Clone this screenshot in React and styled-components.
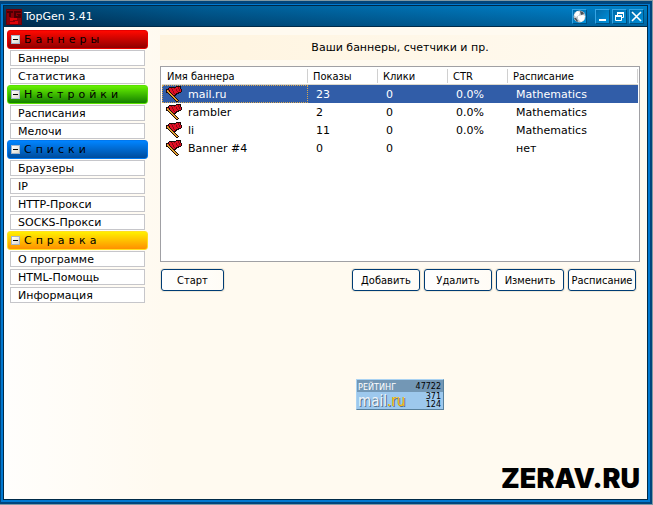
import React from "react";
import styled, { createGlobalStyle } from "styled-components";

const Global = createGlobalStyle`
  * { box-sizing: border-box; }
  html, body { margin: 0; background: #7f99a5; }
  body, button, table { font-family: "DejaVu Sans", Verdana, sans-serif; font-size: 11px; line-height: 14px; color: #000; }
`;

const condensed = `font-family: "DejaVu Sans Condensed", "DejaVu Sans", Tahoma, sans-serif;`;

const Desktop = styled.div`
  padding: 1px 1px 1px 0;
  min-height: 100vh;
  display: flex;
`;

const Frame = styled.div`
  flex: 1;
  display: flex;
  border: solid #00457c;
  border-width: 3px 2px 2px 1px;
  background: #0078d0;
  padding: 1px 2px 2px 2px;
`;

const Win = styled.div`
  flex: 1;
  display: flex;
  flex-direction: column;
  border: 1px solid #002a48;
  background: linear-gradient(90deg, #fffefc 0, #fffaf0 160px, #fffaf0 100%);
`;

const TitleBar = styled.header`
  height: 21px;
  display: flex;
  align-items: center;
  padding: 1px 3px 0 2px;
  background:
    linear-gradient(180deg, rgba(0, 110, 180, 0.25), rgba(0, 20, 50, 0.3)),
    linear-gradient(90deg, #003252 0, #00588c 200px, #0084cc 88%, #0088d0 100%);
  border-bottom: 1px solid #002a48;
`;

const Title = styled.h1`
  flex: 1;
  margin: 0 0 0 2px;
  font-size: 11px;
  font-weight: normal;
  line-height: 14px;
  color: #fff;
`;

const CapButton = styled.button`
  width: 15px;
  height: 15px;
  padding: 0;
  margin-left: ${(p) => (p.$apart ? 8 : 2)}px;
  display: grid;
  place-items: center;
  border: 1px solid;
  border-color: #35a4e4 #00507f #00507f #35a4e4;
  background: linear-gradient(135deg, #0069a8, #0092dc);
`;

const Body = styled.div`
  flex: 1;
  display: flex;
  padding: 3px 7px 3px 3px;
  gap: 12px;
`;

const Sidebar = styled.nav`
  width: 141px;
  flex: none;
`;

const Group = styled.section`
  padding-bottom: 1px;
`;

const GroupHeader = styled.button`
  display: flex;
  align-items: center;
  width: 100%;
  height: 19px;
  margin-bottom: 1px;
  padding: 0 3px;
  gap: 4px;
  border: 1px solid ${(p) => p.$edge};
  border-radius: 3px;
  background: linear-gradient(180deg, ${(p) => p.$from}, ${(p) => p.$to});
  letter-spacing: 4px;
  white-space: nowrap;
`;

const Collapse = styled.span`
  width: 9px;
  height: 9px;
  display: grid;
  place-items: center;
  border: 1px solid #a4b4c8;
  background: linear-gradient(135deg, #fff, #dcd8cc);
  flex: none;

  &::after {
    content: "";
    width: 5px;
    height: 1px;
    background: #000;
  }
`;

const Items = styled.ul`
  list-style: none;
  margin: 0;
  padding: 0 3px;
  display: grid;
  gap: 2px;
`;

const Item = styled.a`
  display: block;
  height: 16px;
  padding-left: 7px;
  border: 1px solid #c6c6ca;
  background: #fff;
  color: #000;
  line-height: 15px;
  text-decoration: none;
`;

const Main = styled.main`
  flex: 1;
  min-width: 0;
  display: flex;
  flex-direction: column;
`;

const Heading = styled.h2`
  margin: 5px 0 6px;
  height: 25px;
  font-size: 11px;
  font-weight: normal;
  line-height: 26px;
  text-align: center;
  background: linear-gradient(90deg, #fff4df, #fffaf0);
`;

const ListBox = styled.div`
  height: 196px;
  padding: 0 1px;
  border: 1px solid #a0a0a4;
  background: #fff;
`;

const Table = styled.table`
  width: 100%;
  table-layout: fixed;
  border-collapse: separate;
  border-spacing: 0;
`;

const Col = styled.col`
  width: ${(p) => p.$w};
`;

const Th = styled.th`
  ${condensed}
  height: 18px;
  padding: 3px 0 0 5px;
  font-weight: normal;
  line-height: 14px;
  text-align: left;
  border-bottom: 1px solid #dcd8cc;
  background: linear-gradient(#d0d0d0, #d0d0d0) right 2px / 1px 14px no-repeat;
`;

const Row = styled.tr`
  background: ${(p) => (p.$selected ? "#315da8" : "transparent")};
  color: ${(p) => (p.$selected ? "#fff" : "#000")};
`;

const Td = styled.td`
  height: 18px;
  padding: 2px 0 0 8px;
  line-height: 16px;
`;

const NameTd = styled(Td)`
  padding: 0 0 0 3px;
  border: 1px dotted ${(p) => (p.$selected ? "#d8a850" : "transparent")};
`;

const Name = styled.span`
  display: flex;
  align-items: center;
  gap: 6px;
  height: 16px;
`;

const NameText = styled.span`
  padding-top: 2px;
  line-height: 14px;
`;

const Actions = styled.div`
  display: flex;
  gap: 4px;
  margin: 7px 4px 0 1px;
`;

const Push = styled.button`
  ${condensed}
  width: ${(p) => (p.$first ? 63 : 68)}px;
  height: 22px;
  margin-right: ${(p) => (p.$first ? "auto" : "0")};
  padding: 1px 0 0;
  border: 1px solid #003c74;
  border-radius: 3px;
  background: linear-gradient(90deg, #fff, #fffcf6);
  box-shadow: 0 0 0 1px #efe8d8;
  white-space: nowrap;
`;

const Rating = styled.a`
  align-self: center;
  width: 88px;
  height: 31px;
  margin: 88px 0 0;
  display: grid;
  grid-template-rows: 12px 17px;
  border: 1px solid;
  border-color: #a9d2f2 #58809c #58809c #a9d2f2;
  background: linear-gradient(#7397b5 12px, #9dc8ed 12px);
  color: #000;
  text-decoration: none;
  font-size: 8px;
  line-height: 8px;
`;

const RatingLine = styled.span`
  display: flex;
  align-items: center;
  justify-content: space-between;
  padding: 1px 2px 0 1px;
`;

const RatingLabel = styled.span`
  ${condensed}
  font-size: 9px;
  color: #fff;
`;

const MailLogo = styled.span`
  ${condensed}
  font-size: 15px;
  line-height: 15px;
  color: #eef4fa;
  text-shadow: 1px 1px 0 #566f86;
`;

const MailRu = styled.span`
  color: #f5b800;
`;

const Counts = styled.span`
  text-align: right;
`;

const Brand = styled.div`
  margin-top: auto;
  align-self: flex-end;
  font-family: Inter, "Liberation Sans", sans-serif;
  font-size: 27px;
  font-weight: 900;
  line-height: 34px;
`;

const flagColors = { k: "#1c0a08", r: "#e01024", d: "#8c0814", o: "#e0a030" };
const flagPixels = [
  "..........kkkkk.",
  "...kkkkkkkrrdrk.",
  "..krrdrrdrrrdrk.",
  "kkkrrrdrrrdrrdrk",
  "korkrrdrrrdrrdrk",
  "kookrrrdrrrdrrrk",
  "kkookrrdrrrrkkk.",
  "..kookrrdrkkk...",
  "...kookrrkk.....",
  "....kookkk......",
  ".....kook.......",
  "......kook......",
  ".......kook.....",
  "........kook....",
  ".........kook...",
  "..........kk....",
];

const flagPath = (key) =>
  flagPixels
    .flatMap((line, y) => [...line].map((c, x) => (c === key ? `M${x} ${y}h1v1h-1z` : "")))
    .join("");

const FlagIcon = () => (
  <svg width="16" height="16" viewBox="0 0 16 16" shapeRendering="crispEdges" aria-hidden="true">
    {Object.entries(flagColors).map(([key, color]) => (
      <path key={key} d={flagPath(key)} fill={color} />
    ))}
  </svg>
);

const AppIcon = () => (
  <svg width="16" height="16" viewBox="0 0 16 16" aria-hidden="true">
    <path d="M0 0h16v16H0z" fill="#8c0008" />
    <path d="M1 2h6v2H5v4H3V4H1zM8 2h7v2h-5v3h2V6h-1V5h4v4H8z" fill="#4c0004" />
    <path d="M4 9h7v2H7v1h5v3H4v-2h5v-1H4z" fill="#e00408" />
    <path d="M0.500 0.500h15v15h-15z" fill="none" stroke="#6c0006" />
  </svg>
);

const GlobeIcon = () => (
  <svg width="13" height="13" viewBox="0 0 13 13" aria-hidden="true">
    <circle cx="6.500" cy="6.500" r="6" fill="#c4c8cc" />
    <path d="M1 5l3-4 3 1-1 3-3 2zM5 6l5-1 2 1-1 4-3 2-3-3z" fill="#fff" />
    <path d="M7 1l3 1 1 2-3 1zM1 8l2 0 2 3-1 1z" fill="#4c5258" />
  </svg>
);

const glyphs = {
  min: <path d="M3 9h7v2H3z" fill="#fff" />,
  restore: (
    <>
      <path d="M4 2h7v2H4zM2 5h7v2H2z" fill="#fff" />
      <path d="M4.500 5V2.500h6v5H9M2.500 5.500h6v5h-6z" fill="none" stroke="#fff" />
    </>
  ),
  close: <path d="M2 2l9 9M11 2l-9 9" fill="none" stroke="#fff" strokeWidth="1.600" />,
};

const CapGlyph = ({ kind }) => (
  <svg width="13" height="13" viewBox="0 0 13 13" aria-hidden="true">
    {glyphs[kind]}
  </svg>
);

const groups = [
  { title: "Баннеры", from: "#ff0800", to: "#900000", edge: "#e80000", items: ["Баннеры", "Статистика"] },
  { title: "Настройки", from: "#66f000", to: "#148000", edge: "#58e000", items: ["Расписания", "Мелочи"] },
  { title: "Списки", from: "#0084ff", to: "#004c9c", edge: "#0078f0", items: ["Браузеры", "IP", "HTTP-Прокси", "SOCKS-Прокси"] },
  { title: "Справка", from: "#fff000", to: "#ff9000", edge: "#ffe020", items: ["О программе", "HTML-Помощь", "Информация"] },
];

const widths = ["146px", "70px", "70px", "60px", "auto"];
const columns = ["Имя баннера", "Показы", "Клики", "CTR", "Расписание"];
const rows = [
  ["mail.ru", "23", "0", "0.0%", "Mathematics"],
  ["rambler", "2", "0", "0.0%", "Mathematics"],
  ["li", "11", "0", "0.0%", "Mathematics"],
  ["Banner #4", "0", "0", "", "нет"],
];

export default function App() {
  return (
    <Desktop>
      <Global />
      <Frame>
        <Win>
          <TitleBar>
            <AppIcon />
            <Title>TopGen 3.41</Title>
            <CapButton aria-label="Сайт"><GlobeIcon /></CapButton>
            <CapButton $apart aria-label="Свернуть"><CapGlyph kind="min" /></CapButton>
            <CapButton aria-label="Восстановить"><CapGlyph kind="restore" /></CapButton>
            <CapButton aria-label="Закрыть"><CapGlyph kind="close" /></CapButton>
          </TitleBar>
          <Body>
            <Sidebar>
              {groups.map((g) => (
                <Group key={g.title}>
                  <GroupHeader $from={g.from} $to={g.to} $edge={g.edge} aria-expanded="true">
                    <Collapse />
                    {g.title}
                  </GroupHeader>
                  <Items>
                    {g.items.map((t) => (
                      <li key={t}><Item href="#">{t}</Item></li>
                    ))}
                  </Items>
                </Group>
              ))}
            </Sidebar>
            <Main>
              <Heading>Ваши баннеры, счетчики и пр.</Heading>
              <ListBox>
                <Table>
                  <colgroup>
                    {widths.map((w, i) => <Col key={i} $w={w} />)}
                  </colgroup>
                  <thead>
                    <tr>{columns.map((c) => <Th key={c} scope="col">{c}</Th>)}</tr>
                  </thead>
                  <tbody>
                    {rows.map(([name, ...cells], r) => (
                      <Row key={name} $selected={r === 0}>
                        <NameTd $selected={r === 0}>
                          <Name><FlagIcon /><NameText>{name}</NameText></Name>
                        </NameTd>
                        {cells.map((c, i) => <Td key={i}>{c}</Td>)}
                      </Row>
                    ))}
                  </tbody>
                </Table>
              </ListBox>
              <Actions>
                <Push $first>Старт</Push>
                <Push>Добавить</Push>
                <Push>Удалить</Push>
                <Push>Изменить</Push>
                <Push>Расписание</Push>
              </Actions>
              <Rating href="#">
                <RatingLine>
                  <RatingLabel>РЕЙТИНГ</RatingLabel>
                  <span>47722</span>
                </RatingLine>
                <RatingLine>
                  <MailLogo>mail<MailRu>.ru</MailRu></MailLogo>
                  <Counts>371<br />124</Counts>
                </RatingLine>
              </Rating>
              <Brand>ZERAV.RU</Brand>
            </Main>
          </Body>
        </Win>
      </Frame>
    </Desktop>
  );
}
